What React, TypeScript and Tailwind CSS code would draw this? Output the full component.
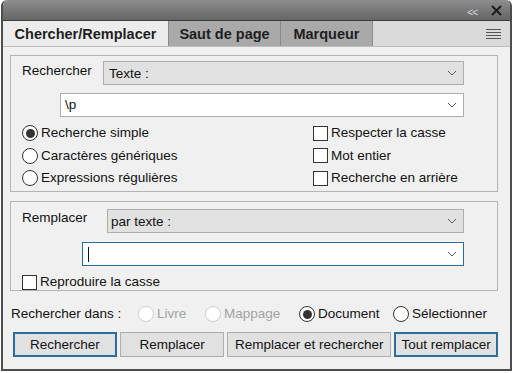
import React from "react"

function Chevron() {
  return (
    <svg width="10" height="6" viewBox="0 0 10 6" className="shrink-0">
      <polyline points="1,1 5,5 9,1" fill="none" stroke="#5a5a5a" strokeWidth="1" />
    </svg>
  )
}

function Radio({ label, checked, disabled }: { label: string; checked?: boolean; disabled?: boolean }) {
  return (
    <div className="flex items-center gap-[3px]">
      <span
        className={`flex h-[16px] w-[16px] items-center justify-center rounded-full border bg-white ${
          disabled ? "border-[#cfcfcf]" : "border-[#333]"
        }`}
      >
        {checked && <span className="h-[9px] w-[9px] rounded-full bg-[#333]" />}
      </span>
      <span className={disabled ? "text-[#a3a3a3]" : "text-[#111]"}>{label}</span>
    </div>
  )
}

function Check({ label }: { label: string }) {
  return (
    <div className="flex items-center gap-[3px]">
      <span className="h-[15px] w-[15px] border border-[#333] bg-white" />
      <span className="text-[#111]">{label}</span>
    </div>
  )
}

function Btn({ label, w, focus }: { label: string; w: string; focus?: boolean }) {
  return (
    <div
      className={`flex h-[25px] items-center justify-center bg-[#e1e1e1] ${w} ${
        focus ? "border-2 border-[#2c6d9c]" : "border border-[#adadad]"
      }`}
    >
      {label}
    </div>
  )
}

export default function App() {
  return (
    <div
      className="h-[373px] w-[514px] bg-white text-[13.5px] leading-[16px] text-[#111]"
      style={{ fontFamily: '"Liberation Sans", Arial, sans-serif' }}
    >
      <div className="ml-[1px] flex h-[371px] w-[511px] flex-col overflow-hidden rounded-t-[6px] border-2 border-t-0 border-[#4d4d4d] bg-[#f0f0f0]">
        {/* title bar */}
        <div className="flex h-[21px] items-center justify-end gap-[14px] border-b border-[#3c3c3c] bg-gradient-to-b from-[#8d8d8d] to-[#666] pr-[8px]">
          <span className="mt-[5px] text-[10px] tracking-[-1px] text-[#d8d8d8]">&lt;&lt;</span>
          <svg width="11" height="11" viewBox="0 0 11 11">
            <path d="M1 1 L10 10 M10 1 L1 10" stroke="#1e1e1e" strokeWidth="2" />
          </svg>
        </div>

        {/* tabs */}
        <div className="flex h-[26px] items-stretch border-b border-[#bdbdbd] bg-[#dadada] text-[14.5px] font-bold text-[#1e1e1e]">
          <div className="flex w-[165px] items-center justify-center bg-[#ececec]">Chercher/Remplacer</div>
          <div className="flex w-[113px] items-center justify-center border-x border-[#8a8a8a] bg-[#a9a9a9]">
            Saut de page
          </div>
          <div className="flex w-[92px] items-center justify-center border-r border-[#8a8a8a] bg-[#a9a9a9]">
            Marqueur
          </div>
          <div className="flex flex-1 items-center justify-end pr-[9px]">
            <svg width="15" height="10" viewBox="0 0 15 10">
              <path d="M0 0.5 H15 M0 3.5 H15 M0 6.5 H15 M0 9.5 H15" stroke="#555" strokeWidth="1" />
            </svg>
          </div>
        </div>

        {/* content */}
        <div className="flex flex-col pl-[7px] pr-[12px] pt-[8px]">
          {/* search group */}
          <div className="flex h-[137px] flex-col border border-[#b4b4b4] pl-[11px] pr-[33px] pt-[5px]">
            <div className="flex h-[24px] items-start">
              <span className="w-[81px] pt-[2px]">Rechercher</span>
              <div className="flex h-[24px] flex-1 items-center justify-between border border-[#adadad] bg-[#e1e1e1] pl-[5px] pr-[6px]">
                <span className="pt-[2px]">Texte :</span>
                <Chevron />
              </div>
            </div>
            <div className="ml-[38px] mt-[8px] flex h-[24px] items-center justify-between border border-[#adadad] bg-white pl-[4px] pr-[6px]">
              <span>\p</span>
              <Chevron />
            </div>
            <div className="mt-[5px] grid grid-cols-[291px_1fr] auto-rows-[22.5px] items-center">
              <Radio label="Recherche simple" checked />
              <Check label="Respecter la casse" />
              <Radio label="Caractères génériques" />
              <Check label="Mot entier" />
              <Radio label="Expressions régulières" />
              <Check label="Recherche en arrière" />
            </div>
          </div>

          {/* replace group */}
          <div className="mt-[9px] flex h-[90px] flex-col border border-[#b4b4b4] pl-[11px] pr-[33px] pt-[7px]">
            <div className="flex h-[24px] items-start">
              <span className="w-[85px] pt-[1px]">Remplacer</span>
              <div className="flex h-[24px] flex-1 items-center justify-between border border-[#adadad] bg-[#e1e1e1] pl-[3px] pr-[6px]">
                <span className="pt-[2px]">par texte :</span>
                <Chevron />
              </div>
            </div>
            <div className="ml-[60px] mt-[9px] flex h-[24px] items-center justify-between border border-[#2c6d9c] bg-white pl-[5px] pr-[6px]">
              <span className="h-[15px] w-[1px] bg-[#111]" />
              <Chevron />
            </div>
            <div className="mt-[8px]">
              <Check label="Reproduire la casse" />
            </div>
          </div>

          {/* scope */}
          <div className="mt-[12px] flex h-[22px] items-center pl-[1px]">
            <span className="w-[127px]">Rechercher dans :</span>
            <div className="w-[67px]">
              <Radio label="Livre" disabled />
            </div>
            <div className="w-[94px]">
              <Radio label="Mappage" disabled />
            </div>
            <div className="w-[94px]">
              <Radio label="Document" checked />
            </div>
            <Radio label="Sélectionner" />
          </div>

          {/* buttons */}
          <div className="ml-[3px] mt-[7px] flex gap-[3px]">
            <Btn label="Rechercher" w="w-[105px]" focus />
            <Btn label="Remplacer" w="w-[106px]" />
            <Btn label="Remplacer et rechercher" w="w-[166px]" />
            <Btn label="Tout remplacer" w="w-[105px]" focus />
          </div>
        </div>
      </div>
    </div>
  )
}
